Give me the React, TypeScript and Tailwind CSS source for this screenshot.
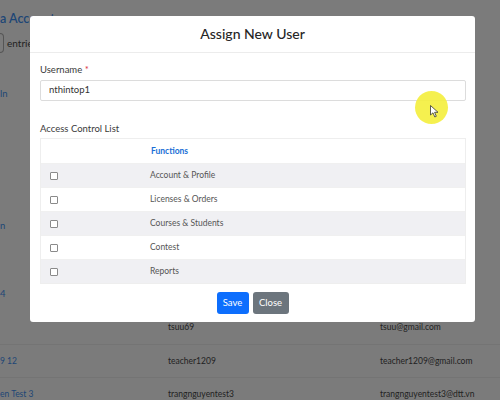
import React from "react";

const rows = [
  "Account & Profile",
  "Licenses & Orders",
  "Courses & Students",
  "Contest",
  "Reports",
];

export default function App() {
  return (
    <div
      className="relative w-[500px] h-[400px] overflow-hidden bg-[#7b7b7b]"
      style={{ fontFamily: 'Lato, "Noto Sans", sans-serif' }}
    >
      {/* background page (dimmed) */}
      <div className="flex flex-col text-[8.5px] text-[#222]">
        <div className="h-[30px] pt-[12px] text-[12.5px] font-semibold text-[#1d4676] leading-[14px]">
          a Accounts
        </div>
        <div className="h-[26px] flex items-center gap-[3px]">
          <div className="w-[4px] h-[20px] border border-l-0 border-[#555] rounded-r-sm" />
          <span className="text-[10px]">entries</span>
        </div>
        <div className="h-[45px] flex items-end text-[#1d4676] text-[9.5px]">ln</div>
        <div className="h-[132px] flex items-end text-[#1d4676] text-[9.5px]">n</div>
        <div className="h-[78px] flex items-end pb-[11px] text-[#1d4676] text-[9.5px] leading-[12px]">4</div>
        <div className="h-[34px] flex items-center border-b border-[#747474]">
          <span className="w-[168px]" />
          <span className="w-[212px]">tsuu69</span>
          <span>tsuu@gmail.com</span>
        </div>
        <div className="h-[33px] flex items-center border-b border-[#747474]">
          <span className="w-[168px] text-[#1d4676]">9 12</span>
          <span className="w-[212px]">teacher1209</span>
          <span>teacher1209@gmail.com</span>
        </div>
        <div className="h-[33px] flex items-center">
          <span className="w-[168px] text-[#1d4676]">en Test 3</span>
          <span className="w-[212px]">trangnguyentest3</span>
          <span>trangnguyentest3@dtt.vn</span>
        </div>
      </div>

      {/* modal */}
      <div className="absolute left-[30px] top-[16px] w-[445px] h-[306px] bg-white rounded-[3px] flex flex-col">
        <div className="h-[37px] flex items-center justify-center border-b border-[#ececec]">
          <span className="text-[14px] font-medium text-[#262626] leading-none">Assign New User</span>
        </div>
        <div className="px-[10px] pt-[10px] flex flex-col">
          <div className="text-[9.5px] leading-[14px] text-[#3a3a3a]">
            Username <span className="text-[#dc3545]">*</span>
          </div>
          <div className="mt-[3px] h-[21px] w-[426px] border border-[#dcdcdc] rounded-[2px] flex items-center px-[8px] text-[9.5px] text-[#333]">
            nthintop1
          </div>
          <div className="mt-[21px] text-[9.5px] leading-[14px] text-[#3a3a3a]">Access Control List</div>
          <div className="mt-[2px] w-[426px] border border-[#eeeeee] flex flex-col">
            <div className="h-[24px] flex items-center">
              <span className="w-[110px]" />
              <span className="text-[8.5px] font-bold text-[#1a6fd6]">Functions</span>
            </div>
            {rows.map((r, i) => (
              <div
                key={r}
                className={`h-[24px] flex items-center border-t border-[#f0f0f0] ${i % 2 === 0 ? "bg-[#f0f0f3]" : "bg-white"}`}
              >
                <span className="w-[109px] pl-[9px] flex items-center">
                  <span className="w-[8px] h-[8px] border border-[#8a8a8a] rounded-[1px] bg-white" />
                </span>
                <span className="text-[8.5px] text-[#555]">{r}</span>
              </div>
            ))}
          </div>
        </div>
        <div className="flex justify-center gap-[4px] pt-[8px]">
          <button className="h-[22px] w-[32px] bg-[#0d6efd] text-white text-[9.5px] rounded-[3px]">Save</button>
          <button className="h-[22px] w-[36px] bg-[#6c757d] text-white text-[9.5px] rounded-[3px]">Close</button>
        </div>
      </div>

      {/* cursor highlight */}
      <div className="absolute left-[415px] top-[91px] w-[33px] h-[33px] rounded-full bg-[#f4ee3c] opacity-90" />
      <svg className="absolute left-[430px] top-[105px]" width="9" height="13" viewBox="0 0 9 13">
        <path d="M0.5 0.5 L0.5 10 L3 7.8 L4.8 12 L6.3 11.3 L4.6 7.3 L8 7.3 Z" fill="#fff" stroke="#333" strokeWidth="0.8" />
      </svg>
    </div>
  );
}
